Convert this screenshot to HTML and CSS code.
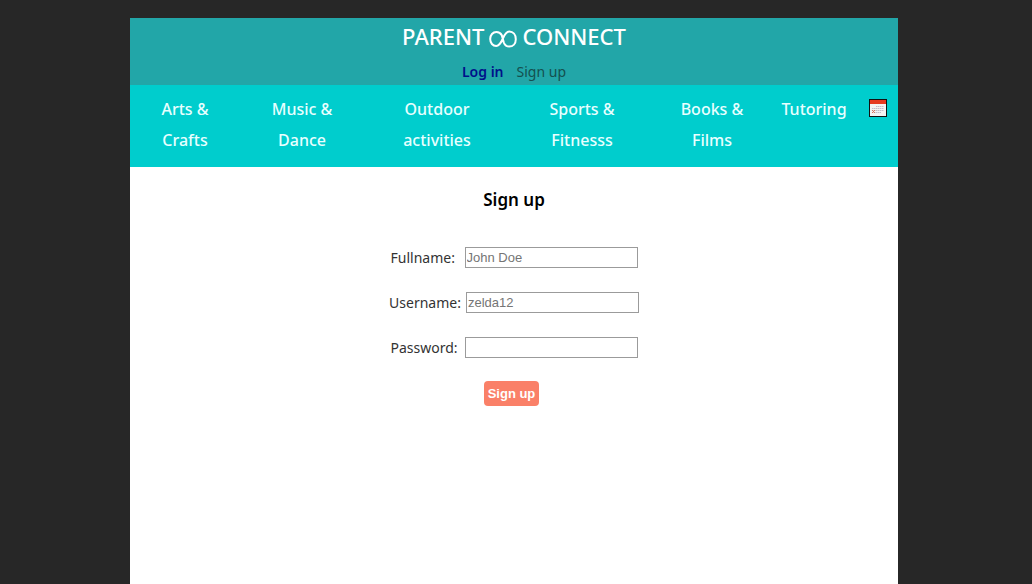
FILE: index.html
```html
<!DOCTYPE html>
<html lang="en">
<head>
<meta charset="utf-8">
<title>Parent Connect - Sign up</title>
<link rel="stylesheet" href="styles.css">
</head>
<body>
<div class="page">
  <header class="header">
    <h1 class="brand">
      <span>PARENT</span>
      <svg class="brand-mark" viewBox="0 0 28 18" aria-hidden="true"><path d="M12.8 5.2C11.6 3 9.8 2 7.4 2C3.8 2 1.2 5 1.2 9S3.8 16 7.2 16C14 16 13.5 1.6 20.2 1.6C24.2 1.6 26.8 4.8 26.8 9.2S24 16.6 20.2 16.6C17.4 16.6 15.8 15 14.8 12.6Z"/></svg>
      <span>CONNECT</span>
    </h1>
    <nav class="account">
      <a class="login" href="#login">Log in</a>
      <a class="signup" href="#signup">Sign up</a>
    </nav>
  </header>
  <nav class="topics">
    <a href="#arts">Arts &amp;<br>Crafts</a>
    <a href="#music">Music &amp;<br>Dance</a>
    <a href="#outdoor">Outdoor<br>activities</a>
    <a href="#sports">Sports &amp;<br>Fitnesss</a>
    <a href="#books">Books &amp;<br>Films</a>
    <a href="#tutoring">Tutoring</a>
    <a class="calendar" href="#calendar" aria-label="Calendar">
      <svg viewBox="0 0 18 18"><path fill="#111" d="M0 0h18v18H0z"/><path fill="#f3f3f3" d="M1 1h16v16H1z"/><path fill="#e63a20" d="M1 1h16v4H1z"/><path d="M7 7.5h8M3 9.5h12M3 11.5h12M3 13.5h9" stroke="#c4bdc9" stroke-dasharray="1.5 .5"/><path d="M3 11l3 3M6 11l-3 3" stroke="#d9755c"/></svg>
    </a>
  </nav>
  <main class="content">
    <h2 class="title">Sign up</h2>
    <form class="form">
      <div class="field"><label for="fullname">Fullname:</label><input id="fullname" type="text" placeholder="John Doe"></div>
      <div class="field"><label for="username">Username:</label><input id="username" type="text" placeholder="zelda12"></div>
      <div class="field"><label for="password">Password:</label><input id="password" type="password"></div>
      <button class="submit" type="submit">Sign up</button>
    </form>
  </main>
</div>
</body>
</html>
```
FILE: styles.css
```css
* { box-sizing: border-box; }
body {
  margin: 0;
  padding: 18px 134px 0 130px;
  background: #272727;
  font-family: "Noto Sans", "Open Sans", sans-serif;
}
a { text-decoration: none; }
.page {
  display: flex;
  flex-direction: column;
  min-height: calc(100vh - 18px);
  background: #fff;
}
.header {
  padding: 2px 0 1px;
  background: #22a6a8;
}
.brand {
  display: flex;
  justify-content: center;
  align-items: center;
  gap: 5px;
  margin: 0;
  color: #fff;
  font-size: 22px;
  font-weight: 500;
  line-height: 32px;
}
.brand-mark {
  width: 28px;
  height: 18px;
  margin-top: 6px;
  fill: none;
  stroke: #fff;
  stroke-width: 2;
}
.account {
  display: flex;
  justify-content: center;
  gap: 13px;
  padding-top: 8px;
  font-size: 14px;
  line-height: 24px;
}
.login { color: #00108a; font-weight: 600; }
.signup { color: #14504f; }
.topics {
  display: grid;
  grid-template-columns: 110fr 124fr 146fr 144fr 116fr 88fr 40fr;
  padding: 9px 0 11px;
  background: #00cdcd;
  text-align: center;
  font-size: 16px;
  font-weight: 500;
  line-height: 31px;
}
.topics a { color: #e8ffff; }
.calendar svg {
  display: block;
  width: 18px;
  height: 18px;
  margin: 5px auto 0;
}
.content { padding-top: 18px; }
.title {
  margin: 0;
  color: #000;
  font-size: 17px;
  font-weight: 600;
  line-height: 30px;
  text-align: center;
}
.form {
  display: flex;
  flex-direction: column;
  align-items: center;
  gap: 24px;
  margin-top: 32px;
}
.field {
  display: flex;
  align-items: center;
  gap: 5px;
}
.field label {
  min-width: 69px;
  color: #333;
  font-size: 14px;
  line-height: 20px;
}
.field input {
  width: 173px;
  height: 21px;
  padding: 1px;
  border: 1px solid #9b9b9b;
  background: #fff;
  font: 13px "Liberation Sans", Arial, sans-serif;
}
.field input::placeholder { color: #757575; }
.submit {
  margin: -1px 5px 0 0;
  padding: 5px 4px;
  border: 0;
  border-radius: 4px;
  background: #fa8068;
  color: #fff;
  font: bold 13px/15px "Liberation Sans", Arial, sans-serif;
}
```
